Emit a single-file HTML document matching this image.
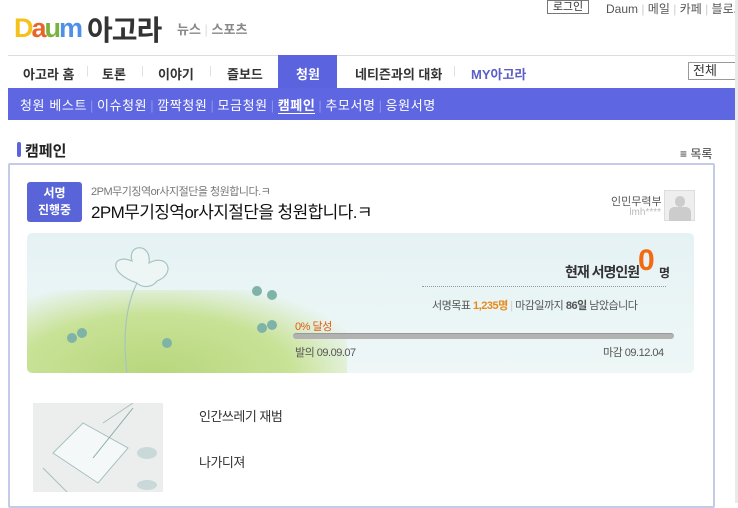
<!DOCTYPE html>
<html><head><meta charset="utf-8"><style>
*{margin:0;padding:0;box-sizing:border-box}
body{width:738px;height:503px;overflow:hidden;background:#fff;font-family:"Liberation Sans","Noto Sans CJK KR",sans-serif;position:relative;color:#333}
.a{position:absolute;white-space:nowrap}
.s{color:#8d93ea;margin:0 3px}
</style></head><body>
<!-- logo -->
<div class="a" style="left:14px;top:13px;font:bold 27px 'Liberation Sans',sans-serif;letter-spacing:-2px"><span style="color:#f5c21b">D</span><span style="color:#e8642a">a</span><span style="color:#7ab33c">u</span><span style="color:#4f8fe6">m</span></div>
<div class="a" style="left:87px;top:9px;font-size:28px;font-weight:bold;color:#333;letter-spacing:-1px">아고라</div>
<div class="a" style="left:177px;top:19px;font-size:13px;color:#888;font-weight:bold">뉴스 <span style="color:#ddd;font-weight:normal">|</span> 스포츠</div>
<!-- top right -->
<div class="a" style="left:547px;top:0px;width:42px;height:14px;border:1px solid #777;font-size:11px;text-align:center;line-height:12px;color:#333">로그인</div>
<div class="a" style="left:606px;top:0px;font-size:12px;color:#555">Daum <span style="color:#ccc">|</span> 메일 <span style="color:#ccc">|</span> 카페 <span style="color:#ccc">|</span> 블로그</div>
<!-- nav -->
<div class="a" style="left:8px;top:55px;width:730px;height:32px;border-top:1px solid #ddd;background:#fff"></div>
<div class="a" style="left:278px;top:55px;width:59px;height:33px;background:#5b63de"></div>
<div class="a" style="left:23px;top:64px;font-size:13px;font-weight:bold;color:#333">아고라 홈</div>
<div class="a" style="left:86px;top:65px;font-size:11px;color:#ddd">|</div>
<div class="a" style="left:102px;top:64px;font-size:13px;font-weight:bold;color:#333">토론</div>
<div class="a" style="left:141px;top:65px;font-size:11px;color:#ddd">|</div>
<div class="a" style="left:158px;top:64px;font-size:13px;font-weight:bold;color:#333">이야기</div>
<div class="a" style="left:209px;top:65px;font-size:11px;color:#ddd">|</div>
<div class="a" style="left:227px;top:64px;font-size:13px;font-weight:bold;color:#333">즐보드</div>
<div class="a" style="left:296px;top:64px;font-size:13px;font-weight:bold;color:#fff">청원</div>
<div class="a" style="left:355px;top:64px;font-size:13px;font-weight:bold;color:#333">네티즌과의 대화</div>
<div class="a" style="left:453px;top:65px;font-size:11px;color:#ddd">|</div>
<div class="a" style="left:471px;top:64px;font-size:13px;font-weight:bold;color:#5b5fc7">MY아고라</div>
<div class="a" style="left:688px;top:62px;width:52px;height:18px;border:1px solid #999;font-size:13px;padding-left:4px;line-height:16px;color:#333">전체</div>
<!-- subnav -->
<div class="a" style="left:8px;top:88px;width:730px;height:32px;background:#5e67e1"></div>
<div class="a" style="left:20px;top:95px;font-size:13px;color:#fff;letter-spacing:0.6px">청원 베스트<span class="s">|</span>이슈청원<span class="s">|</span>깜짝청원<span class="s">|</span>모금청원<span class="s">|</span><b style="border-bottom:1px solid #fff">캠페인</b><span class="s">|</span>추모서명<span class="s">|</span>응원서명</div>
<!-- title -->
<div class="a" style="left:17px;top:142px;width:4px;height:15px;background:#5b63de;border-radius:2px"></div>
<div class="a" style="left:25px;top:140px;font-size:15px;font-weight:bold;color:#222">캠페인</div>
<div class="a" style="left:680px;top:145px;font-size:12px;color:#333">≡ 목록</div>
<!-- box -->
<div class="a" style="left:8px;top:163px;width:707px;height:345px;border:2px solid #c4cbe6;border-radius:2px"></div>
<div class="a" style="left:735px;top:0;width:3px;height:503px;background:#eaeaea"></div>
<div class="a" style="left:27px;top:182px;width:55px;height:40px;background:#5964d8;border-radius:3px;color:#fff;font-size:12px;font-weight:bold;text-align:center;line-height:17px;padding-top:3px">서명<br>진행중</div>
<div class="a" style="left:91px;top:183px;font-size:11px;color:#777;letter-spacing:-0.5px">2PM무기징역or사지절단을 청원합니다.ㅋ</div>
<div class="a" style="left:91px;top:198px;font-size:17px;color:#111;letter-spacing:-0.6px">2PM무기징역or사지절단을 청원합니다.ㅋ</div>
<div class="a" style="left:611px;top:193px;font-size:11px;color:#555;text-align:right;width:50px">인민무력부</div>
<div class="a" style="left:611px;top:207px;font-size:10px;color:#bbb;text-align:right;width:50px">lmh****</div>
<div class="a" style="left:664px;top:190px;width:31px;height:31px;border:1px solid #ddd;background:#eee"><div style="position:absolute;left:10px;top:5px;width:10px;height:11px;border-radius:5px;background:#ccc"></div><div style="position:absolute;left:4px;top:16px;width:22px;height:14px;background:#ccc;border-radius:5px 5px 0 0"></div></div>
<!-- panel -->
<div class="a" style="left:27px;top:233px;width:667px;height:140px;border-radius:5px;background:linear-gradient(#e5f2f4,#eef7f6)"></div>
<div class="a" style="left:27px;top:290px;width:320px;height:83px;border-radius:0 0 0 5px;background:radial-gradient(ellipse at 40% 100%,#b7d77d 0%,#c8e296 50%,rgba(230,242,240,0) 80%)"></div>
<svg class="a" style="left:27px;top:233px" width="667" height="140"><g fill="none" stroke="#a9c3c0" stroke-width="1.2"><path d="M100 140 C95 100 100 70 110 50"/><path d="M110 50 C80 40 85 20 105 28 C100 10 125 10 122 30 C140 20 150 40 130 48 C125 55 115 55 110 50Z" fill="#eef6f5"/></g><g fill="#7fb3a8"><circle cx="45" cy="105" r="5"/><circle cx="55" cy="100" r="5"/><circle cx="235" cy="95" r="5"/><circle cx="245" cy="92" r="5"/><circle cx="140" cy="110" r="5"/><circle cx="230" cy="58" r="5"/><circle cx="245" cy="62" r="5"/></g></svg>
<div class="a" style="left:565px;top:262px;font-size:14px;font-weight:bold;color:#333;letter-spacing:-1px">현재 서명인원</div>
<div class="a" style="left:638px;top:244px;font-size:30px;font-weight:bold;color:#f26a12">0</div>
<div class="a" style="left:659px;top:264px;font-size:12px;font-weight:bold;color:#333">명</div>
<div class="a" style="left:422px;top:286px;width:244px;border-top:1px dotted #999"></div>
<div class="a" style="left:432px;top:297px;font-size:11px;color:#555;letter-spacing:-0.5px">서명목표 <b style="color:#e88a1a">1,235명</b> <span style="color:#ccc">|</span> 마감일까지 <b>86일</b> 남았습니다</div>
<div class="a" style="left:295px;top:318px;font-size:11px;color:#e05a1a;letter-spacing:-0.5px">0% 달성</div>
<div class="a" style="left:293px;top:333px;width:381px;height:6px;background:#b2b2b2;border-radius:3px;border-top:1px solid #999"></div>
<div class="a" style="left:295px;top:344px;font-size:11px;color:#555;letter-spacing:-0.5px">발의 09.09.07</div>
<div class="a" style="left:603px;top:344px;font-size:11px;color:#555;letter-spacing:-0.5px">마감 09.12.04</div>
<!-- bottom -->
<div class="a" style="left:33px;top:403px;width:130px;height:89px;background:#eceeed"></div>
<svg class="a" style="left:33px;top:403px" width="130" height="89"><path d="M20 50 L50 20 L95 45 L65 80Z" fill="#f4f8f8" stroke="#a8c0c0"/><path d="M10 65 L40 95 M70 20 L100 0" stroke="#a8c0c0" fill="none"/><path d="M60 55 L100 5" stroke="#8aa" /><ellipse cx="114" cy="50" rx="10" ry="6" fill="#c9d8d8"/><ellipse cx="114" cy="82" rx="10" ry="5" fill="#c9d8d8"/></svg>
<div class="a" style="left:199px;top:406px;font-size:13px;color:#333;letter-spacing:-0.5px">인간쓰레기 재범</div>
<div class="a" style="left:199px;top:452px;font-size:13px;color:#333;letter-spacing:-0.5px">나가디져</div>
</body></html>
